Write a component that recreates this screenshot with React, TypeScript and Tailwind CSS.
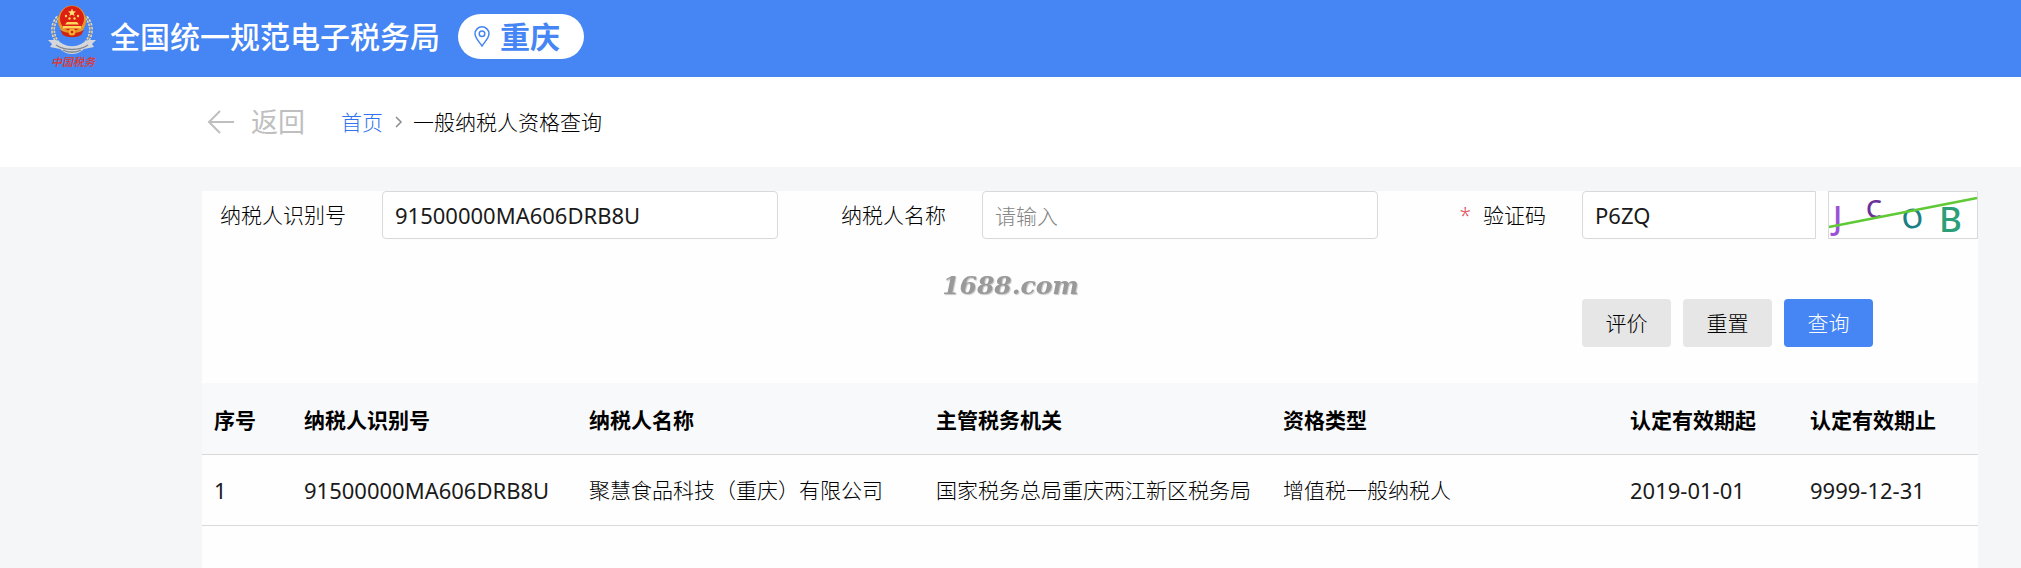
import { useState } from 'react'
import type { ReactNode } from 'react'

interface FieldProps {
  id: string
  label: string
  required?: boolean
  children: ReactNode
}

interface TaxpayerRecord {
  taxId: string
  name: string
  authority: string
  type: string
  validFrom: string
  validTo: string
}

const records: TaxpayerRecord[] = [
  {
    taxId: '91500000MA606DRB8U',
    name: '聚慧食品科技（重庆）有限公司',
    authority: '国家税务总局重庆两江新区税务局',
    type: '增值税一般纳税人',
    validFrom: '2019-01-01',
    validTo: '9999-12-31'
  }
]

const columns = [
  { title: '序号', width: 'w-[90px]' },
  { title: '纳税人识别号', width: 'w-[285px]' },
  { title: '纳税人名称', width: '' },
  { title: '主管税务机关', width: '' },
  { title: '资格类型', width: '' },
  { title: '认定有效期起', width: 'w-[180px]' },
  { title: '认定有效期止', width: 'w-[180px]' }
]

const inputStyles =
  'h-12 min-w-0 flex-1 border border-[#d9d9d9] bg-white px-3 text-[22px] font-normal text-[#1a1a1a] outline-none placeholder:text-[21px] placeholder:font-light placeholder:text-[#858585]'

function TaxEmblem() {
  return (
    <svg viewBox="0 0 48 66" className="h-[66px] w-12 overflow-visible" role="img" aria-label="中国税务">
      {/* Wheat wreath */}
      <g fill="none" stroke="#d9d6c8" strokeWidth="4" strokeDasharray="2.5 1.2">
        <path d="M10 13C3 21 3 33 13 42" />
        <path d="M38 13c7 8 7 20-3 29" />
      </g>
      <g fill="none" stroke="#8c8a78" strokeWidth="1">
        <path d="M10 13C3 21 3 33 13 42" />
        <path d="M38 13c7 8 7 20-3 29" />
      </g>
      {/* Ribbon */}
      <path d="M0 36l8 0 7 4c6 3 12 3 18 0l7-4 8 0-4 4 2 3-10 2c-3 3-8 5-12 5s-9-2-12-5l-10-2 2-3z" fill="#d4d7dc" />
      <path d="M8 41c9 6 23 6 32 0M15 46c5 3 13 3 18 0" fill="none" stroke="#83878f" strokeWidth="1.3" />
      {/* National emblem */}
      <ellipse cx="24" cy="16.500" rx="14" ry="15" fill="#e9952b" />
      <ellipse cx="24" cy="14.500" rx="12" ry="12.500" fill="#dc1f12" />
      <path d="M24 4.500l1.100 2.700 2.900.2-2.200 1.800.7 2.800-2.500-1.500-2.500 1.500.7-2.800L20 7.400l2.900-.2z" fill="#ffe27a" />
      <g fill="#ffd65c">
        <circle cx="18" cy="12" r="1.200" />
        <circle cx="21.500" cy="14.500" r="1.200" />
        <circle cx="26.500" cy="14.500" r="1.200" />
        <circle cx="30" cy="12" r="1.200" />
        <path d="M19 18h10l2 2.500H17zM15 22h18v2.500H15z" />
      </g>
      <path d="M12 26c6 4 18 4 24 0l-3 5c-5 3-13 3-18 0z" fill="#cf2414" />
      <circle cx="24" cy="28" r="3.500" fill="#f3ad2f" />
      <circle cx="24" cy="28" r="1.300" fill="#cf2414" />
      <text x="25" y="62" textAnchor="middle" className="fill-[#e0352b] font-['Noto_Sans_CJK_SC',sans-serif] text-[11px] font-medium italic">
        中国税务
      </text>
    </svg>
  )
}

function PinIcon() {
  return (
    <svg viewBox="0 0 16 21" className="h-[21px] w-4" fill="none" stroke="#4585f4" strokeWidth="1.500" aria-hidden="true">
      <path d="M8 20C5 15.500 1 12 1 7.800a7 7 0 0 1 14 0C15 12 11 15.500 8 20z" />
      <circle cx="8" cy="7.800" r="2.800" />
    </svg>
  )
}

function CaptchaImage() {
  return (
    <svg viewBox="0 0 148 46" className="h-full w-full overflow-visible font-['Noto_Sans',sans-serif] font-medium" aria-hidden="true">
      <text x="4" y="37" fontSize="32" fill="#9b51d6">J</text>
      <text x="37" y="26" fontSize="25" fill="#6a3296">C</text>
      <text x="73" y="36" fontSize="27" fill="#1c7f86" transform="rotate(-8 84 27)">O</text>
      <text x="110" y="40" fontSize="35" fill="#2c9f78">B</text>
      <path d="M0 35L148 6" stroke="#5fc936" strokeWidth="2.500" />
    </svg>
  )
}

function Field({ id, label, required, children }: FieldProps) {
  return (
    <div className="flex items-center">
      <label htmlFor={id} className="flex w-[180px] shrink-0 justify-end gap-3 pr-9 whitespace-nowrap">
        {required && <span className="text-[#e34d59]">*</span>}
        {label}
      </label>
      {children}
    </div>
  )
}

export default function App() {
  const [taxId, setTaxId] = useState('91500000MA606DRB8U')
  const [name, setName] = useState('')
  const [code, setCode] = useState('P6ZQ')

  const handleReset = () => {
    setTaxId('')
    setName('')
    setCode('')
  }

  return (
    <div className="flex min-h-screen flex-col bg-[#f5f6f8] font-['Noto_Sans','Noto_Sans_CJK_SC',sans-serif] text-[21px] leading-8 font-light text-black">
      {/* Header */}
      <header className="flex h-[77px] items-center bg-[#4585f4] pb-1 pl-12">
        <TaxEmblem />
        <h1 className="ml-3.5 text-[30px] font-medium text-white">全国统一规范电子税务局</h1>
        <button
          type="button"
          className="ml-[18px] flex h-[45px] items-center gap-2.5 rounded-full bg-white pr-6 pl-4 text-[30px] font-bold text-[#4585f4]"
        >
          <PinIcon />
          重庆
        </button>
      </header>

      {/* Breadcrumb */}
      <nav className="flex h-[90px] items-center bg-white pl-[207px]">
        <button type="button" className="flex items-center gap-4 text-[27px] font-normal text-[#bfbfbf]">
          <svg viewBox="0 0 28 24" className="h-6 w-7" fill="none" stroke="currentColor" strokeWidth="2" aria-hidden="true">
            <path d="M27 12H2M13 1L2 12l11 11" />
          </svg>
          返回
        </button>
        <a href="#home" className="ml-9 text-[#2f73ee]">首页</a>
        <svg viewBox="0 0 8 12" className="mr-2.5 ml-3 h-3 w-2" fill="none" stroke="#8c8c8c" strokeWidth="1.500" aria-hidden="true">
          <path d="M1 1l5 5-5 5" />
        </svg>
        <span>一般纳税人资格查询</span>
      </nav>

      <main className="mt-6 mr-[43px] ml-[202px] flex-1 bg-[#fefefe]">
        {/* Search form */}
        <form className="grid grid-cols-3 gap-x-6 gap-y-[60px] pb-9" onSubmit={(e) => e.preventDefault()}>
          <Field id="taxId" label="纳税人识别号">
            <input id="taxId" className={`${inputStyles} rounded`} value={taxId} onChange={(e) => setTaxId(e.target.value)} />
          </Field>
          <Field id="name" label="纳税人名称">
            <input
              id="name"
              className={`${inputStyles} rounded`}
              placeholder="请输入"
              value={name}
              onChange={(e) => setName(e.target.value)}
            />
          </Field>
          <Field id="code" label="验证码" required>
            <input id="code" className={`${inputStyles} rounded-l`} value={code} onChange={(e) => setCode(e.target.value)} />
            <button type="button" aria-label="刷新验证码" className="ml-3 h-12 w-[150px] border border-[#d9d9d9] bg-white">
              <CaptchaImage />
            </button>
          </Field>

          {/* Actions */}
          <div className="col-start-3 flex gap-3 pl-[180px]">
            <button type="button" className="h-12 w-[89px] rounded bg-[#e6e6e6]">评价</button>
            <button type="button" className="h-12 w-[89px] rounded bg-[#e6e6e6]" onClick={handleReset}>重置</button>
            <button type="submit" className="h-12 w-[89px] rounded bg-[#4585f4] text-white">查询</button>
          </div>
        </form>

        {/* Results */}
        <table className="w-full table-fixed border-collapse text-left">
          <thead>
            <tr className="h-[71px] border-b border-[#d9d9d9] bg-[#f8f9fb]">
              {columns.map((column) => (
                <th key={column.title} className={`${column.width} px-3 pt-1 font-bold whitespace-nowrap`}>
                  {column.title}
                </th>
              ))}
            </tr>
          </thead>
          <tbody>
            {records.map((record, index) => (
              <tr key={record.taxId} className="h-[71px] border-b border-[#d9d9d9] whitespace-nowrap">
                <td className="px-3 text-[22px] font-normal text-[#1a1a1a]">{index + 1}</td>
                <td className="px-3 text-[22px] font-normal text-[#1a1a1a]">{record.taxId}</td>
                <td className="px-3">{record.name}</td>
                <td className="px-3">{record.authority}</td>
                <td className="px-3">{record.type}</td>
                <td className="px-3 text-[22px] font-normal text-[#1a1a1a]">{record.validFrom}</td>
                <td className="px-3 text-[22px] font-normal text-[#1a1a1a]">{record.validTo}</td>
              </tr>
            ))}
          </tbody>
        </table>
      </main>

      {/* Watermark */}
      <div className="pointer-events-none fixed inset-0 flex items-center justify-center pt-1">
        <span className="font-['DejaVu_Serif',serif] text-[25px] font-bold text-[#999999] italic text-shadow-[1px_1px_1px_#c4c4c4]">
          1688.com
        </span>
      </div>
    </div>
  )
}
